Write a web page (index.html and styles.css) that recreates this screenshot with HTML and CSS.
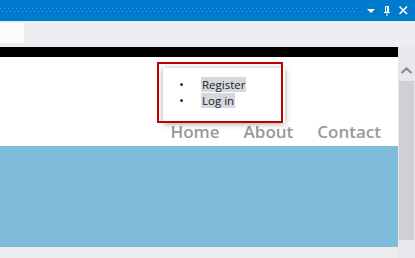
FILE: index.html
```html
<!DOCTYPE html>
<html>
<head>
<meta charset="utf-8">
<link rel="stylesheet" href="styles.css">
</head>
<body>
<div class="titlebar">
  <div class="grip"><div class="dots"></div><div class="dots dots-b"></div></div>
  <div class="tb-icon"><svg width="16" height="21" viewBox="0 0 16 21"><polygon points="4,9 12,9 8,13" fill="#fff"/></svg></div>
  <div class="tb-icon"><svg width="16" height="21" viewBox="0 0 16 21"><path d="M6.5 6.5 H9.5 V12 H6.5 Z" fill="none" stroke="#fff" stroke-width="1"/><path d="M5 12.5 H11" stroke="#fff" stroke-width="1"/><path d="M8 12.5 V16" stroke="#fff" stroke-width="1"/><path d="M8.5 7 V11.5" stroke="#fff" stroke-width="1"/></svg></div>
  <div class="tb-icon"><svg width="16" height="21" viewBox="0 0 16 21"><path d="M4.5 6.5 L12 14 M12 6.5 L4.5 14" stroke="#fff" stroke-width="1.6"/></svg></div>
</div>
<div class="toolbar"><div class="tool-box"></div></div>
<div class="main">
  <div class="viewport">
    <div class="blackbar"></div>
    <div class="header">
      <nav class="nav">
        <a class="nav-link">Home</a>
        <a class="nav-link">About</a>
        <a class="nav-link">Contact</a>
      </nav>
    </div>
    <div class="hero"></div>
    <div class="dropdown">
      <ul class="menu">
        <li class="menu-item"><span class="menu-text">Register</span></li>
        <li class="menu-item"><span class="menu-text">Log in</span></li>
      </ul>
    </div>
    <div class="annot"></div>
  </div>
  <div class="scrollbar">
    <svg class="sb-arrow" width="17" height="7" viewBox="0 0 17 7"><path d="M3.5 6 L8.5 1.5 L13.5 6" fill="none" stroke="#868999" stroke-width="2.2"/></svg>
    <div class="thumb"></div>
  </div>
</div>
</body>
</html>
```
FILE: styles.css
```css
html, body {
  margin: 0;
  padding: 0;
  width: 415px;
  height: 258px;
  overflow: hidden;
  background: #eeeef2;
  font-family: "Open Sans", "Noto Sans", sans-serif;
}
.titlebar {
  height: 21px;
  background: #007acc;
  display: flex;
  align-items: stretch;
  padding-right: 4px;
}
.grip {
  width: 358px;
  margin-right: 5px;
  padding-top: 8px;
  box-sizing: border-box;
}
.dots {
  height: 1px;
  margin-bottom: 2px;
  background: repeating-linear-gradient(to right, #4f9fe0 0 1px, transparent 1px 4px);
}
.dots-b {
  margin-left: 2px;
}
.tb-icon {
  width: 16px;
  height: 21px;
}
.tb-icon svg { display: block; }
.toolbar {
  height: 26px;
  padding-top: 2px;
  box-sizing: border-box;
  background: #eeeef2;
}
.tool-box {
  width: 24px;
  height: 20px;
  background: #fbfbfb;
}
.main {
  display: flex;
  height: 211px;
}
.viewport {
  position: relative;
  width: 398px;
  background: #ececec;
}
.blackbar {
  height: 10px;
  background: #000;
}
.header {
  height: 89px;
  background: #fff;
  display: flex;
  align-items: flex-end;
  justify-content: flex-end;
}
.nav {
  display: flex;
  gap: 24px;
  padding-right: 17px;
  padding-bottom: 3px;
}
.nav-link {
  color: #999;
  font-family: "Open Sans", sans-serif;
  font-weight: 600;
  font-size: 17px;
  line-height: 22px;
}
.hero {
  height: 101px;
  background: #7fbcdb;
}
.dropdown {
  position: absolute;
  left: 163px;
  top: 21px;
  width: 122px;
  height: 55px;
  background: #fff;
  box-shadow: 0 1px 6px rgba(0, 0, 0, 0.35);
}
.menu {
  list-style: none;
  margin: 0;
  padding: 10px 0 0 0;
}
.menu-item {
  position: relative;
  padding-left: 38px;
  height: 16px;
  font-size: 11.5px;
  line-height: 13px;
  color: #222;
}
.menu-item::before {
  content: "";
  position: absolute;
  left: 17px;
  top: 5px;
  width: 3px;
  height: 3px;
  border-radius: 50%;
  background: #333;
}
.menu-text {
  background: #d5d8de;
  padding: 0 1px;
}
.annot {
  position: absolute;
  left: 157px;
  top: 15px;
  width: 122px;
  height: 57px;
  border: 2px solid #c00000;
}
.scrollbar {
  width: 17px;
  background: #e8e8ec;
  padding-top: 20px;
  box-sizing: border-box;
}
.sb-arrow { display: block; }
.thumb {
  margin: 7px 1px 0 1px;
  height: 159px;
  background: #d0d0d4;
}
```
